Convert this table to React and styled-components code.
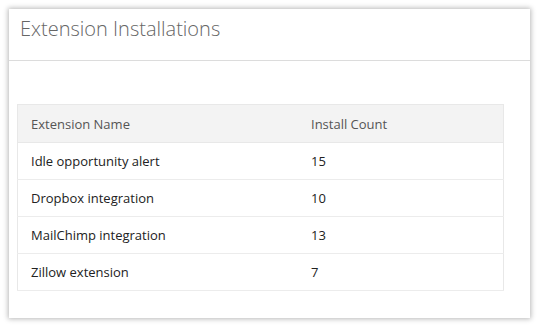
import React from "react";
import styled, { createGlobalStyle } from "styled-components";

const Global = createGlobalStyle`
  html, body { margin: 0; padding: 0; background: #ffffff; }
  body { font-family: "Open Sans", "Noto Sans", sans-serif; }
`;

const Page = styled.div`
  padding: 9px 9px 9px 9px;
  width: 539px;
  height: 327px;
  box-sizing: border-box;
`;

const Card = styled.section`
  width: 521px;
  height: 309px;
  background: #fff;
  box-sizing: border-box;
  box-shadow: 0 0 5px 1px rgba(0, 0, 0, 0.28);
  display: flex;
  flex-direction: column;
`;

const Header = styled.header`
  height: 52px;
  box-sizing: border-box;
  border-bottom: 1px solid #dcdcdc;
  padding: 6px 0 0 11px;
`;

const Title = styled.h1`
  margin: 0;
  font-family: "Open Sans", sans-serif;
  font-weight: 300;
  font-size: 20px;
  line-height: 28px;
  color: #666666;
`;

const Body = styled.div`
  padding: 43px 26px 0 8px;
`;

const Table = styled.table`
  width: 487px;
  border-collapse: collapse;
  border: 1px solid #e8e8e8;
  font-family: "Open Sans", sans-serif;
  font-size: 13px;
`;

const HeadCell = styled.th`
  text-align: left;
  font-weight: 400;
  color: #555;
  background: #f3f3f3;
  height: 37px;
  padding: 0 0 0 13px;
  width: ${(p) => p.$w || "auto"};
  border-bottom: 1px solid #e8e8e8;
`;

const Cell = styled.td`
  color: #222;
  height: 36px;
  padding: 0 0 0 13px;
  border-bottom: 1px solid #ececec;
`;

const rows = [
  ["Idle opportunity alert", 15],
  ["Dropbox integration", 10],
  ["MailChimp integration", 13],
  ["Zillow extension", 7],
];

export default function App() {
  return (
    <>
      <Global />
      <Page>
        <Card>
          <Header>
            <Title>Extension Installations</Title>
          </Header>
          <Body>
            <Table>
              <thead>
                <tr>
                  <HeadCell $w="267px">Extension Name</HeadCell>
                  <HeadCell>Install Count</HeadCell>
                </tr>
              </thead>
              <tbody>
                {rows.map(([n, c]) => (
                  <tr key={n}>
                    <Cell>{n}</Cell>
                    <Cell>{c}</Cell>
                  </tr>
                ))}
              </tbody>
            </Table>
          </Body>
        </Card>
      </Page>
    </>
  );
}
